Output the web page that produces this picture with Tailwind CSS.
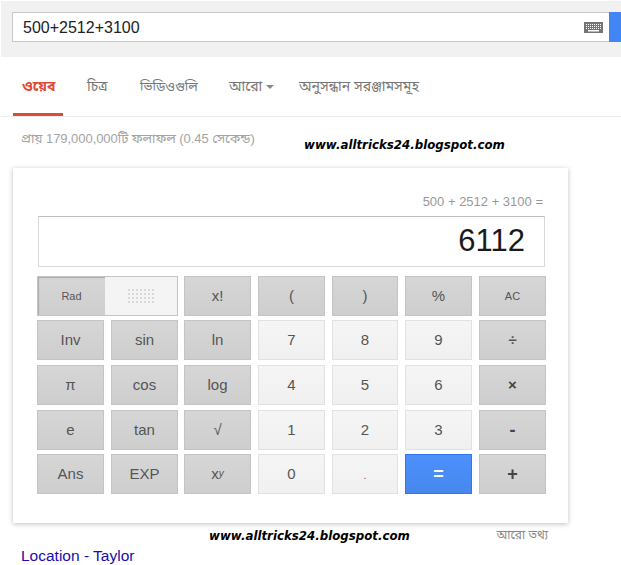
<!DOCTYPE html>
<html lang="bn"><head><meta charset="utf-8">
<script src="https://cdn.jsdelivr.net/npm/@tailwindcss/browser@4"></script>
</head>
<body class="bg-white w-[621px] h-[565px] overflow-hidden relative font-['Liberation_Sans','Noto_Sans_Bengali','Noto_Sans',sans-serif]">
<div class="mt-px ml-px h-[56px] bg-[#f1f1f1] pt-[11px] pl-[11px]">
  <div class="flex h-[30px] bg-white border-y border-l border-[#c8c8c8] items-center">
    <span class="flex-1 pl-[10px] pt-[2px] text-[16px] text-[#222]">500+2512+3100</span>
    <svg class="mr-[6px]" width="19" height="11" viewBox="0 0 19 11"><rect width="19" height="11" fill="#757575"/><g fill="#fff"><rect x="2" y="2" width="15" height="1"/><rect x="2" y="4" width="15" height="1"/><rect x="2" y="6" width="15" height="1"/><rect x="4" y="8" width="11" height="1.5"/></g><g fill="#757575"><rect x="3" y="1" width="1" height="7"/><rect x="5" y="1" width="1" height="7"/><rect x="7" y="1" width="1" height="7"/><rect x="9" y="1" width="1" height="7"/><rect x="11" y="1" width="1" height="7"/><rect x="13" y="1" width="1" height="7"/><rect x="15" y="1" width="1" height="7"/></g></svg>
    <span class="w-[12px] h-[30px] -my-px bg-[#4285f4]"></span>
  </div>
</div>
<nav class="relative ml-px h-[60px] border-b border-[#ebebeb] text-[14px] text-[#777]">
  <div class="flex items-center h-[59px] pl-[21px]">
    <span class="w-[65px] font-bold text-[#dd4b39]">ওয়েব</span>
    <span class="w-[53px]">চিত্র</span>
    <span class="w-[89px] text-[13px]">ভিডিওগুলি</span>
    <span class="w-[70px] flex items-center gap-[4px]">আরো<i class="block w-0 h-0 border-x-[4px] border-x-transparent border-t-[4px] border-t-[#888]"></i></span>
    <span>অনুসন্ধান সরঞ্জামসমূহ</span>
  </div>
  <div class="absolute left-[12px] top-[56px] w-[50px] h-[3px] bg-[#dd4b39]"></div>
</nav>
<div class="flex items-center h-[44px] pl-[21px] text-[13px] text-[#a3a3a3] tracking-[-0.05px]">প্রায় 179,000,000টি ফলাফল (0.45 সেকেন্ড)</div>
<section class="ml-[13px] mt-[7px] w-[555px] h-[355px] bg-white shadow-[0_1px_5px_rgba(0,0,0,0.25)] pt-[26px] pl-[24px]">
  <div class="w-[507px] text-right text-[13px] leading-[16px] text-[#999] pr-px">500 + 2512 + 3100 =</div>
  <div class="mt-[6px] ml-px w-[507px] h-[51px] border border-[#d9d9d9] border-t-[#bdbdbd] flex items-center justify-end pr-[19px] text-[31px] text-[#1a1a1a]">6112</div>
  <div class="mt-[9px] grid grid-cols-[74px_73px_74px_74px_73px_74px_67px] grid-rows-[44px_45px_45px_44px_40px] text-[15px] text-[#555]">
    <div class="col-span-2 flex h-[40px] border border-[#c4c4c4] w-[141px]">
      <div class="w-[67px] flex items-center justify-center text-[11px] bg-linear-to-b from-[#d6d6d6] to-[#cecece] shadow-[inset_1px_1px_1px_#aaa]">Rad</div>
      <div class="flex-1 bg-[#f4f4f4] flex items-center justify-center">
        <svg width="27" height="15" viewBox="0 0 27 15" fill="#d8d8d8"><path d="M0 0h2v2H0zM4 0h2v2H4zM8 0h2v2H8zM12 0h2v2h-2zM16 0h2v2h-2zM20 0h2v2h-2zM24 0h2v2h-2zM0 4h2v2H0zM4 4h2v2H4zM8 4h2v2H8zM12 4h2v2h-2zM16 4h2v2h-2zM20 4h2v2h-2zM24 4h2v2h-2zM0 8h2v2H0zM4 8h2v2H4zM8 8h2v2H8zM12 8h2v2h-2zM16 8h2v2h-2zM20 8h2v2h-2zM24 8h2v2h-2zM0 12h2v2H0zM4 12h2v2H4zM8 12h2v2H8zM12 12h2v2h-2zM16 12h2v2h-2zM20 12h2v2h-2zM24 12h2v2h-2z"/></svg>
      </div>
    </div>
    <button class="h-[40px] w-[67px] border border-[#c4c4c4] bg-linear-to-b from-[#d6d6d6] to-[#cecece]">x!</button>
    <button class="h-[40px] w-[67px] border border-[#c4c4c4] bg-linear-to-b from-[#d6d6d6] to-[#cecece]">(</button>
    <button class="h-[40px] w-[66px] border border-[#c4c4c4] bg-linear-to-b from-[#d6d6d6] to-[#cecece]">)</button>
    <button class="h-[40px] w-[67px] border border-[#c4c4c4] bg-linear-to-b from-[#d6d6d6] to-[#cecece]">%</button>
    <button class="h-[40px] w-[67px] border border-[#c4c4c4] bg-linear-to-b from-[#d6d6d6] to-[#cecece] text-[11px]">AC</button>

    <button class="h-[40px] w-[67px] border border-[#c4c4c4] bg-linear-to-b from-[#d6d6d6] to-[#cecece]">Inv</button>
    <button class="h-[40px] w-[67px] border border-[#c4c4c4] bg-linear-to-b from-[#d6d6d6] to-[#cecece]">sin</button>
    <button class="h-[40px] w-[67px] border border-[#c4c4c4] bg-linear-to-b from-[#d6d6d6] to-[#cecece]">ln</button>
    <button class="h-[40px] w-[67px] border border-[#e1e1e1] bg-linear-to-b from-[#f5f5f5] to-[#f0f0f0]">7</button>
    <button class="h-[40px] w-[66px] border border-[#e1e1e1] bg-linear-to-b from-[#f5f5f5] to-[#f0f0f0]">8</button>
    <button class="h-[40px] w-[67px] border border-[#e1e1e1] bg-linear-to-b from-[#f5f5f5] to-[#f0f0f0]">9</button>
    <button class="h-[40px] w-[67px] border border-[#c4c4c4] bg-linear-to-b from-[#d6d6d6] to-[#cecece] font-bold">÷</button>

    <button class="h-[40px] w-[67px] border border-[#c4c4c4] bg-linear-to-b from-[#d6d6d6] to-[#cecece]">π</button>
    <button class="h-[40px] w-[67px] border border-[#c4c4c4] bg-linear-to-b from-[#d6d6d6] to-[#cecece]">cos</button>
    <button class="h-[40px] w-[67px] border border-[#c4c4c4] bg-linear-to-b from-[#d6d6d6] to-[#cecece]">log</button>
    <button class="h-[40px] w-[67px] border border-[#e1e1e1] bg-linear-to-b from-[#f5f5f5] to-[#f0f0f0]">4</button>
    <button class="h-[40px] w-[66px] border border-[#e1e1e1] bg-linear-to-b from-[#f5f5f5] to-[#f0f0f0]">5</button>
    <button class="h-[40px] w-[67px] border border-[#e1e1e1] bg-linear-to-b from-[#f5f5f5] to-[#f0f0f0]">6</button>
    <button class="h-[40px] w-[67px] border border-[#c4c4c4] bg-linear-to-b from-[#d6d6d6] to-[#cecece] font-bold text-[#444]">×</button>

    <button class="h-[40px] w-[67px] border border-[#c4c4c4] bg-linear-to-b from-[#d6d6d6] to-[#cecece]">e</button>
    <button class="h-[40px] w-[67px] border border-[#c4c4c4] bg-linear-to-b from-[#d6d6d6] to-[#cecece]">tan</button>
    <button class="h-[40px] w-[67px] border border-[#c4c4c4] bg-linear-to-b from-[#d6d6d6] to-[#cecece]">√</button>
    <button class="h-[40px] w-[67px] border border-[#e1e1e1] bg-linear-to-b from-[#f5f5f5] to-[#f0f0f0]">1</button>
    <button class="h-[40px] w-[66px] border border-[#e1e1e1] bg-linear-to-b from-[#f5f5f5] to-[#f0f0f0]">2</button>
    <button class="h-[40px] w-[67px] border border-[#e1e1e1] bg-linear-to-b from-[#f5f5f5] to-[#f0f0f0]">3</button>
    <button class="h-[40px] w-[67px] border border-[#c4c4c4] bg-linear-to-b from-[#d6d6d6] to-[#cecece] font-bold text-[18px] text-[#444]">-</button>

    <button class="h-[40px] w-[67px] border border-[#c4c4c4] bg-linear-to-b from-[#d6d6d6] to-[#cecece]">Ans</button>
    <button class="h-[40px] w-[67px] border border-[#c4c4c4] bg-linear-to-b from-[#d6d6d6] to-[#cecece]">EXP</button>
    <button class="h-[40px] w-[67px] border border-[#c4c4c4] bg-linear-to-b from-[#d6d6d6] to-[#cecece]">x<span class="relative -top-[2px] italic text-[10px]">y</span></button>
    <button class="h-[40px] w-[67px] border border-[#e1e1e1] bg-linear-to-b from-[#f5f5f5] to-[#f0f0f0]">0</button>
    <button class="h-[40px] w-[66px] border border-[#e1e1e1] bg-linear-to-b from-[#f5f5f5] to-[#f0f0f0] text-[10px] pt-[3px]">.</button>
    <button class="h-[40px] w-[67px] border border-[#3079ed] bg-linear-to-b from-[#4d90fe] to-[#4787ed] text-white font-bold text-[18px] pt-px">=</button>
    <button class="h-[40px] w-[67px] border border-[#c4c4c4] bg-linear-to-b from-[#d6d6d6] to-[#cecece] font-bold text-[18px] text-[#444]">+</button>
  </div>
</section>
<div class="relative h-[42px]">
  <span class="absolute right-[73px] top-[3px] text-[12px] text-[#888]">আরো তথ্য</span>
  <a class="absolute left-[21px] top-[23px] text-[15.5px] leading-[20px] text-[#1a0dab]">Location - Taylor</a>
</div>
<span class="absolute left-[304px] top-[137px] font-['DejaVu_Sans'] font-bold italic text-[11.8px] leading-[16px] text-black whitespace-nowrap">www.alltricks24.blogspot.com</span>
<span class="absolute left-[209px] top-[528px] font-['DejaVu_Sans'] font-bold italic text-[11.8px] leading-[16px] text-black whitespace-nowrap">www.alltricks24.blogspot.com</span>
</body></html>
